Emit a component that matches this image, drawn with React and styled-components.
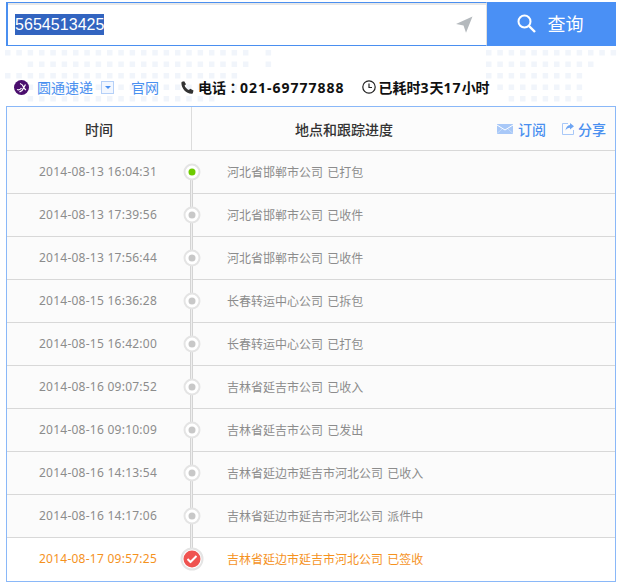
import React from 'react';
import styled, { createGlobalStyle } from 'styled-components';

const GlobalStyle = createGlobalStyle`
  html, body {
    margin: 0;
    padding: 0;
    background: #fff;
  }
  body {
    font-family: "Noto Sans", "Noto Sans CJK SC", sans-serif;
    font-size: 12px;
  }
`;

const Page = styled.div`
  position: relative;
  width: 610px;
  padding: 2px 4px 5px 6px;
`;

const SearchBar = styled.div`
  display: flex;
  height: 44px;
`;

const InputBox = styled.div`
  flex: 1;
  display: flex;
  align-items: center;
  justify-content: space-between;
  box-sizing: border-box;
  padding: 0 13px 0 7px;
  border: 2px solid #4a8ff0;
  border-top-width: 1px;
  border-right: 1px solid #e0e0e0;
  border-bottom-width: 1px;
  box-shadow: inset 0 2px 0 #e8e8e8;
  background: #fff;
`;

const SelectedText = styled.span`
  display: block;
  height: 21px;
  line-height: 21px;
  background: #3264c0;
  color: #fff;
  font-family: "Liberation Sans", Arial, sans-serif;
  font-size: 16px;
  letter-spacing: 0.05px;
`;

const SearchButton = styled.button`
  width: 129px;
  display: flex;
  align-items: center;
  justify-content: center;
  gap: 12px;
  padding: 0 3px 2px 0;
  border: none;
  background: #4a90f5;
  color: #fff;
  font-family: "Noto Sans CJK SC", sans-serif;
  font-size: 18px;
`;

const DotMap = styled.svg`
  position: absolute;
  left: 0;
  top: 0;
  z-index: 0;
  pointer-events: none;
`;

const InfoRow = styled.div`
  position: relative;
  z-index: 1;
  display: flex;
  align-items: center;
  height: 60px;
  padding: 22px 0 0 8px;
  box-sizing: border-box;
  font-family: "Noto Sans CJK SC", sans-serif;
  font-size: 14px;
`;

const CompanyLink = styled.a`
  color: #4a90f0;
  margin-left: ${(p) => p.$gap}px;
`;

const DropBox = styled.span`
  display: flex;
  align-items: center;
  justify-content: center;
  box-sizing: border-box;
  width: 13px;
  height: 13px;
  margin-left: 8px;
  border: 1px solid #b5d0f8;
  background: #f2f7ff;

  &::after {
    content: '';
    border-top: 3px solid #4a90f0;
    border-left: 3px solid transparent;
    border-right: 3px solid transparent;
  }
`;

const Strong = styled.span`
  display: flex;
  align-items: center;
  gap: ${(p) => p.$iconGap}px;
  color: #111;
  font-weight: 700;
  margin-left: ${(p) => p.$gap}px;
`;

const Label = styled.span`
  white-space: pre;
`;

const Colon = styled.span`
  font-family: "Noto Sans CJK TC", sans-serif;
`;

const Digits = styled.span`
  font-family: "Noto Sans", sans-serif;
  letter-spacing: ${(p) => p.$spacing || 0}px;
`;

const Table = styled.div`
  position: relative;
  z-index: 1;
  box-sizing: border-box;
  border: 1px solid #8ab8f8;
  background: #fff;
`;

const HeadRow = styled.div`
  display: grid;
  grid-template-columns: 185px 1fr;
  height: 44px;
  box-sizing: border-box;
  border-bottom: 1px solid #d8d8d8;
  background: #fcfcfc;
  font-family: "Noto Sans CJK SC", sans-serif;
  font-size: 14px;
  font-weight: 500;
  color: #333;
`;

const HeadTime = styled.div`
  display: flex;
  align-items: center;
  justify-content: center;
  border-right: 1px solid #dcdcdc;
`;

const HeadTrack = styled.div`
  display: flex;
  align-items: center;
  padding-left: 103px;
`;

const HeadActions = styled.div`
  display: flex;
  align-items: center;
  margin-left: auto;
  padding-right: 9px;
`;

const ActionLink = styled.a`
  display: flex;
  align-items: center;
  gap: ${(p) => p.$iconGap}px;
  margin-left: ${(p) => p.$gap || 0}px;
  color: #4a90f0;
`;

const Row = styled.div`
  display: grid;
  grid-template-columns: 182px 1fr;
  height: 43px;
  padding-bottom: 2px;
  box-sizing: border-box;
  border-bottom: ${(p) => (p.$done ? 'none' : '1px solid #d8d8d8')};
  background: ${(p) => (p.$done ? '#fff' : '#fbfbfb')};
  color: ${(p) => (p.$done ? '#f5921e' : '#8c8c8c')};
  position: relative;
`;

const Time = styled.div`
  display: flex;
  align-items: center;
  justify-content: center;
  font-family: "Noto Sans", sans-serif;
  letter-spacing: 0.25px;
`;

const Place = styled.div`
  display: flex;
  align-items: center;
  padding-left: 38px;
  font-family: "Noto Sans CJK SC", sans-serif;
  white-space: pre;
  word-spacing: 1.5px;
`;

const Rail = styled.span`
  position: absolute;
  left: 183px;
  width: 3px;
  box-sizing: border-box;
  top: ${(p) => (p.$first ? '21px' : '-1px')};
  bottom: ${(p) => (p.$last ? '21px' : '-1px')};
  border-left: 1px solid #d4d4d4;
  border-right: 1px solid #d4d4d4;
  background: #efefef;
`;

const Node = styled.span`
  position: absolute;
  left: 184.5px;
  top: 21px;
  transform: translate(-50%, -50%);
  display: flex;
  align-items: center;
  justify-content: center;
  box-sizing: border-box;
  width: ${(p) => (p.$done ? 23 : 17)}px;
  height: ${(p) => (p.$done ? 23 : 17)}px;
  border-radius: 50%;
  border: 2px solid #e4e4e4;
  background: #fff;
`;

const NodeCore = styled.span`
  display: flex;
  align-items: center;
  justify-content: center;
  width: ${(p) => (p.$done ? 17 : 7)}px;
  height: ${(p) => (p.$done ? 17 : 7)}px;
  flex: none;
  border-radius: 50%;
  background: ${(p) => p.$color};
`;

const steps = [
  ['2014-08-13 16:04:31', '河北省邯郸市公司 已打包'],
  ['2014-08-13 17:39:56', '河北省邯郸市公司 已收件'],
  ['2014-08-13 17:56:44', '河北省邯郸市公司 已收件'],
  ['2014-08-15 16:36:28', '长春转运中心公司 已拆包'],
  ['2014-08-15 16:42:00', '长春转运中心公司 已打包'],
  ['2014-08-16 09:07:52', '吉林省延吉市公司 已收入'],
  ['2014-08-16 09:10:09', '吉林省延吉市公司 已发出'],
  ['2014-08-16 14:13:54', '吉林省延边市延吉市河北公司 已收入'],
  ['2014-08-16 14:17:06', '吉林省延边市延吉市河北公司 派件中'],
  ['2014-08-17 09:57:25', '吉林省延边市延吉市河北公司 已签收'],
];

// dot map rows: y, then [x origin, first col, last col]
const dotRows = [
  [50, [5, 0, 21], [5, 23, 23], [486, 0, 11]],
  [61.5, [5, 2, 21], [5, 23, 23], [486, 0, 9]],
  [73, [5, 0, 20], [486, 0, 8]],
  [84.5, [5, 1, 20], [486, 1, 8]],
  [96, [5, 2, 18], [486, 2, 8]],
];

const WorldDots = () => (
  <DotMap width="620" height="106">
    {dotRows.map(([y, ...runs]) =>
      runs.map(([x0, from, to]) =>
        Array.from({ length: to - from + 1 }, (_, i) => (
          <rect
            key={`${y}-${x0}-${from + i}`}
            x={x0 + (from + i) * 11.33}
            y={y}
            width="5.5"
            height="5.5"
            fill="#f1f5fb"
          />
        ))
      )
    )}
  </DotMap>
);

const LocateIcon = () => (
  <svg width="17" height="17" viewBox="0 0 17 17">
    <path d="M16.5.5 0 8l7.5 1.600L10 16.800z" fill="#b4b9bd" />
  </svg>
);

const SearchIcon = () => (
  <svg width="19" height="19" viewBox="0 0 19 19" fill="none" stroke="#fff">
    <circle cx="7.5" cy="7.5" r="6" strokeWidth="2" />
    <path d="M12 12l6 6" strokeWidth="2.4" />
  </svg>
);

const LogoIcon = () => (
  <svg width="15" height="15" viewBox="0 0 15 15">
    <circle cx="7.5" cy="7.5" r="7.5" fill="#4b0f6e" />
    <path
      d="M3 9.500c2 .8 3.500 0 4.500-1.500M6 3.500c2 .6 3 2 3.500 3.500.4 1.200 1.500 2.500 2.500 3M11.500 4.500 8 10.500 5.500 12"
      fill="none"
      stroke="#fff"
      strokeWidth="1.300"
    />
  </svg>
);

const PhoneIcon = () => (
  <svg width="13" height="13" viewBox="0 0 13 13">
    <path
      d="M1 .8 3.200.2 5 3.200 3.600 4.600c.6 1.900 2.200 3.600 4.200 4.400L9.300 7.700l3.200 1.900-.6 2.300c-.2.600-.8.900-1.400.9C5 12.500.5 7.500.4 2.200.4 1.500.5 1 1 .8z"
      fill="#333"
    />
  </svg>
);

const ClockIcon = () => (
  <svg width="14" height="14" viewBox="0 0 14 14" fill="none" stroke="#222" strokeWidth="1.200">
    <circle cx="7" cy="7" r="6.200" />
    <path d="M7 3.500V7.500H10" />
  </svg>
);

const MailIcon = () => (
  <svg width="16" height="10" viewBox="0 0 16 10">
    <rect width="16" height="10" fill="#a8c8f8" />
    <path d="M0 1l8 5 8-5" fill="none" stroke="#fff" />
    <path d="M0 9.500l5-4.500M16 9.500 11 5" fill="none" stroke="#d6e5fb" strokeWidth=".7" />
  </svg>
);

const ShareIcon = () => (
  <svg width="12" height="12" viewBox="0 0 12 12" fill="none">
    <path d="M6 .5H.5v11h11V7" stroke="#a8c8f8" />
    <path d="M8 0l4 3.200L8 6.400V4.700C6 4.700 4.500 5.500 3.500 7.500 3.700 4.500 5.500 2.200 8 2z" fill="#6ea5f3" />
  </svg>
);

const CheckIcon = () => (
  <svg width="11" height="9" viewBox="0 0 11 9" fill="none">
    <path d="M1 4.500 4 7.500 10 1.500" stroke="#fff" strokeWidth="2" />
  </svg>
);

const coreColor = (i, last) => {
  if (i === 0) return '#6ecb00';
  if (i === last) return '#ef5350';
  return '#c8c8c8';
};

export default function App() {
  const last = steps.length - 1;
  return (
    <Page>
      <GlobalStyle />
      <WorldDots />
      <SearchBar>
        <InputBox>
          <SelectedText>5654513425</SelectedText>
          <LocateIcon />
        </InputBox>
        <SearchButton>
          <SearchIcon />
          查询
        </SearchButton>
      </SearchBar>

      <InfoRow>
        <LogoIcon />
        <CompanyLink $gap={8}>圆通速递</CompanyLink>
        <DropBox />
        <CompanyLink $gap={17}>官网</CompanyLink>
        <Strong $gap={22} $iconGap={4}>
          <PhoneIcon />
          <Label>
            电话<Colon>：</Colon>
            <Digits $spacing={1}>021-69777888</Digits>
          </Label>
        </Strong>
        <Strong $gap={17} $iconGap={3}>
          <ClockIcon />
          <Label>
            已耗时<Digits $spacing={1}>3</Digits>天<Digits $spacing={1}>17</Digits>小时
          </Label>
        </Strong>
      </InfoRow>

      <Table>
        <HeadRow>
          <HeadTime>时间</HeadTime>
          <HeadTrack>
            地点和跟踪进度
            <HeadActions>
              <ActionLink $iconGap={5}>
                <MailIcon />
                订阅
              </ActionLink>
              <ActionLink $iconGap={4} $gap={16}>
                <ShareIcon />
                分享
              </ActionLink>
            </HeadActions>
          </HeadTrack>
        </HeadRow>
        {steps.map(([time, place], i) => (
          <Row key={time} $done={i === last}>
            <Time>{time}</Time>
            <Place>{place}</Place>
            <Rail $first={i === 0} $last={i === last} />
            <Node $done={i === last}>
              <NodeCore $done={i === last} $color={coreColor(i, last)}>
                {i === last && <CheckIcon />}
              </NodeCore>
            </Node>
          </Row>
        ))}
      </Table>
    </Page>
  );
}
